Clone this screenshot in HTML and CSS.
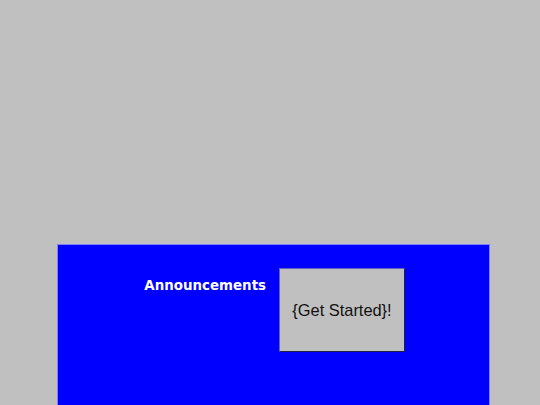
FILE: index.html
```html
<!DOCTYPE html>
<html>
<head>
<meta charset="utf-8">
<link rel="stylesheet" href="styles.css">
</head>
<body>
<div class="panel">
  <div class="label-col"><span class="label">Announcements</span></div>
  <div class="card">{Get Started}!</div>
</div>
</body>
</html>
```
FILE: styles.css
```css
html, body {
  margin: 0;
  padding: 0;
  background: #c0c0c0;
  height: 100%;
  overflow: hidden;
}
.panel {
  margin: 244px 0 0 57px;
  width: 431px;
  height: 137px;
  background: #0000ff;
  border: 1px solid #8080ff;
  border-bottom: none;
  display: flex;
  align-items: flex-start;
  padding-top: 23px;
}
.label-col {
  width: 208px;
  text-align: right;
  padding-top: 8px;
}
.label {
  font-family: "DejaVu Sans", sans-serif;
  font-weight: bold;
  font-size: 13.4px;
  color: #ffffff;
}
.card {
  margin-left: 13px;
  width: 124px;
  height: 82px;
  background: #c0c0c0;
  border: 1px solid;
  border-color: #6060c0 #202040 #202040 #6060c0;
  display: flex;
  align-items: center;
  justify-content: center;
  font-family: "Liberation Sans", Arial, sans-serif;
  font-size: 16.4px;
  color: #111;
}
```
